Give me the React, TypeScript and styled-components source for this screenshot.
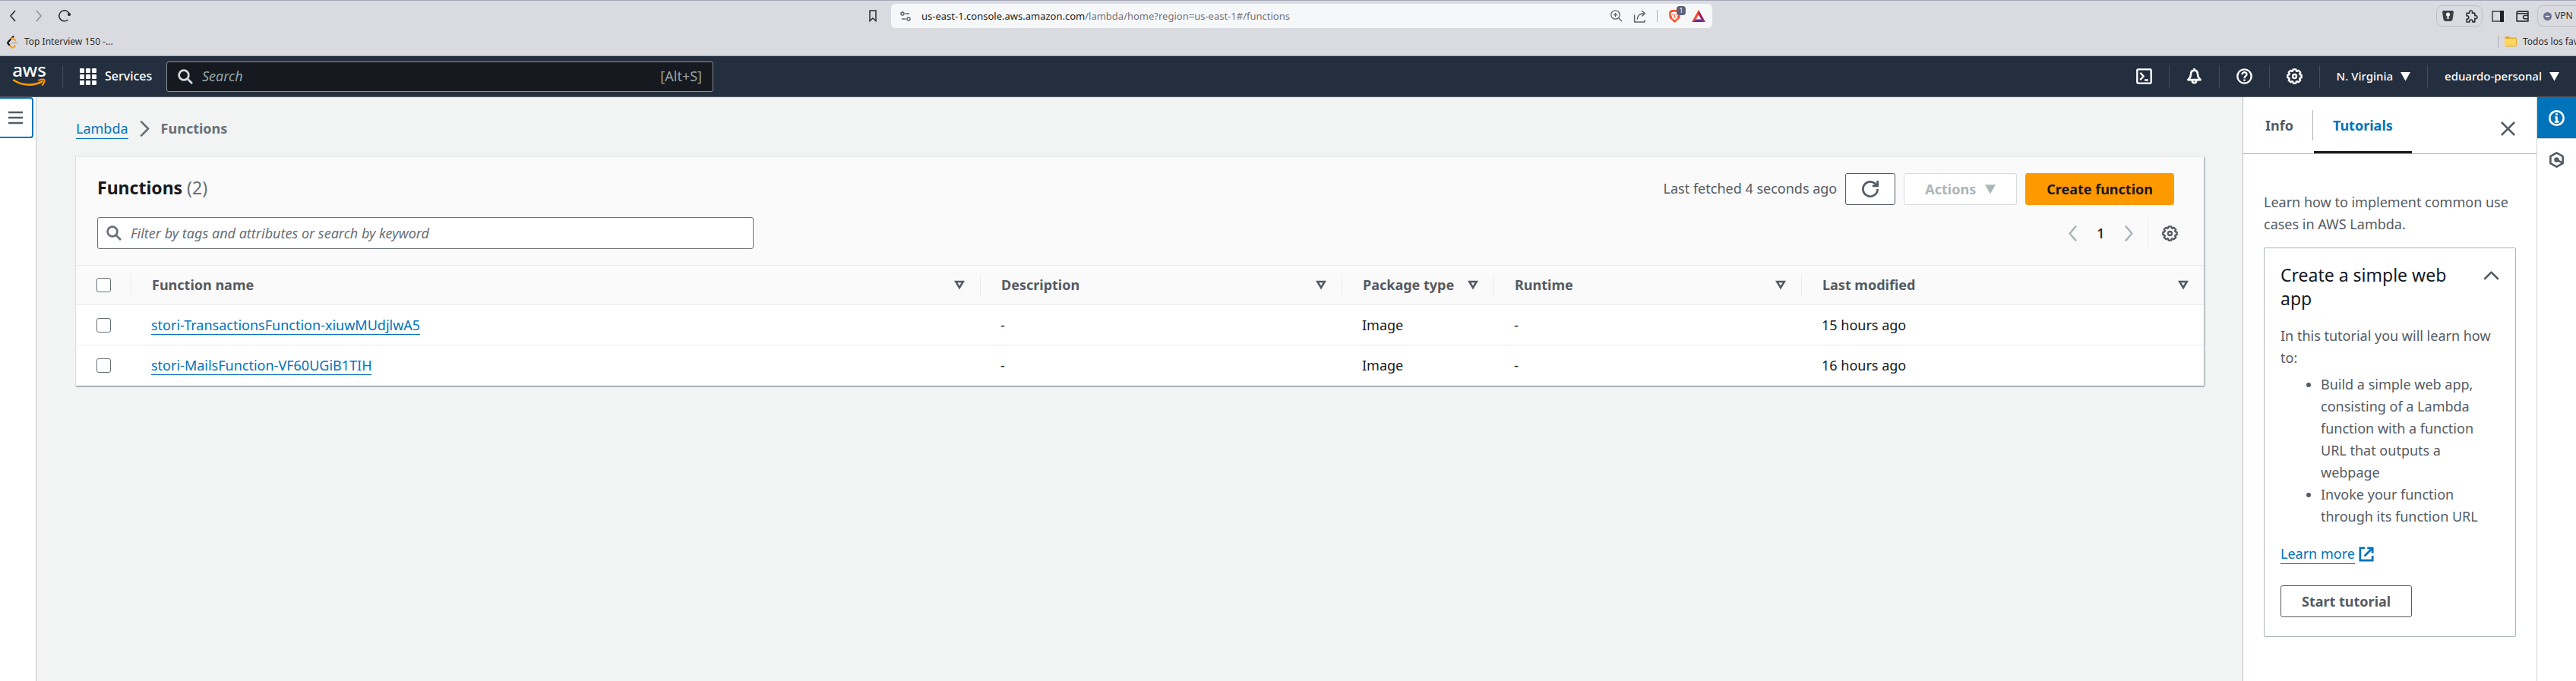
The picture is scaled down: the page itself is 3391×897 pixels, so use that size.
import React from 'react';
import styled, { createGlobalStyle, css } from 'styled-components';

const GlobalStyle = createGlobalStyle`
  *, *::before, *::after { box-sizing: border-box; }
  body {
    margin: 0;
    background: #f2f3f3;
    color: #16191f;
    font-family: "Noto Sans", "Open Sans", sans-serif;
    font-size: 18px;
    line-height: 29px;
  }
  button, input { font: inherit; color: inherit; }
  button { cursor: pointer; }
  h1, h2, p, ul { margin: 0; }
  svg { display: block; flex: none; }
`;

/* ---------- icons ---------- */

type IconProps = { size?: number; width?: number; children: React.ReactNode };

const Line = ({ size = 21, width = 2, children }: IconProps) => (
  <svg width={size} height={size} viewBox="0 0 16 16" fill="none" stroke="currentColor" strokeWidth={width} strokeLinejoin="round" aria-hidden="true">
    {children}
  </svg>
);

const gearPath = (() => {
  const points: string[] = [];
  const teeth = 8;
  for (let i = 0; i < teeth; i++) {
    const mid = (i / teeth) * Math.PI * 2 - Math.PI / 2;
    [[-0.3, 5.7], [-0.2, 7.1], [0.2, 7.1], [0.3, 5.7]].forEach(([a, r]) =>
      points.push(`${(8 + Math.cos(mid + a) * r).toFixed(2)} ${(8 + Math.sin(mid + a) * r).toFixed(2)}`),
    );
  }
  return `M${points.join('L')}Z`;
})();

const GearIcon = () => <Line width={1.8}><path d={gearPath} /><circle cx="8" cy="8" r="1.900" /></Line>;
const SearchIcon = () => <Line size={20} width={2.2}><circle cx="6.4" cy="6.4" r="5.1" /><path d="M10 10l5.2 5.2" /></Line>;
const RefreshIcon = () => (
  <Line size={22}><path strokeLinejoin="miter" d="M10 5h5V0M15 8a7 7 0 1 1-.7-3" /></Line>
);
const CaretDown = ({ size = 13 }: { size?: number }) => (
  <svg width={size} height={size} viewBox="0 0 12 12" fill="currentColor" aria-hidden="true"><path d="M0 1h12L6 11.500z" /></svg>
);
const SortIcon = () => (
  <svg width="14" height="13" viewBox="0 0 14 13" fill="none" stroke="currentColor" strokeWidth="2.600" aria-hidden="true"><path d="M2.200 2h9.600L7 10z" /></svg>
);
const LogoSvg = styled.svg`
  overflow: visible;
`;
const AwsLogo = () => (
  <LogoSvg width="44" height="32" viewBox="0 0 44 32" aria-hidden="true">
    <text x="21.500" y="15" textAnchor="middle" fontSize="24" fontWeight="500" fill="#fff">aws</text>
    <path d="M1 19.500C12 27 27 27.500 38.500 21.300" fill="none" stroke="#f90" strokeWidth="2.600" strokeLinecap="round" />
    <path d="M34 19.600c3-1 6.500-1.300 7.400-.4.800 1-.4 4.500-2.700 6.800" fill="none" stroke="#f90" strokeWidth="2" strokeLinecap="round" />
  </LogoSvg>
);
const GridIcon = () => (
  <svg width="22" height="22" viewBox="0 0 22 22" fill="currentColor" aria-hidden="true">
    {[0, 8, 16].map((y) => [0, 8, 16].map((x) => <rect key={`${x}-${y}`} x={x} y={y} width="6" height="6" rx="1" />))}
  </svg>
);
const BraveIcon = () => (
  <svg width="17" height="18" viewBox="0 0 17 18" aria-hidden="true">
    <path d="M4 1h9l3 3-.6 7.500L8.500 18 1.600 11.500 1 4z" fill="#fb542b" />
    <path d="M4 4.500l2.500-.7h4l2.500.7.6 2-1.600 3.500.3 1.500-3.800 3-3.800-3L5 10 3.400 6.500z" fill="#fff" />
    <path d="M5 7l2.200.6M12 7l-2.200.6M8.500 7v3.500M6.800 11.800l1.700-.9 1.700.9" stroke="#fb542b" fill="none" />
  </svg>
);
const BatIcon = () => (
  <svg width="18" height="16" viewBox="0 0 18 16" aria-hidden="true">
    <path d="M9 0L0 16l5.600-3.600L9 6.200z" fill="#ff4724" />
    <path d="M9 0l9 16-5.600-3.600L9 6.200z" fill="#9e1f63" />
    <path d="M0 16h18l-5.600-3.600H5.600z" fill="#662d91" />
  </svg>
);
const LeetIcon = () => (
  <svg width="15" height="17" viewBox="0 0 15 17" fill="none" strokeWidth="2.200" strokeLinecap="round" aria-hidden="true">
    <path d="M8.500 1.200L1.800 8.300c-.6.700-.6 1.500 0 2.200L4 13" stroke="#111" />
    <path d="M6 4l2-.6 3 2.600M4.200 13.200l2.200 2.200c.7.500 1.600.500 2.300 0l2-2" stroke="#f89f1b" />
    <path d="M7 9.500h6.500" stroke="#b3b3b3" />
  </svg>
);

/* ---------- browser chrome ---------- */

const Chrome = styled.div`
  height: 74px;
  background: #dadbe0;
  border-top: 1px solid #a4a6b6;
  border-bottom: 1px solid #a9abb5;
  color: #2b2c30;
  font-size: 12px;
  line-height: 20px;
  overflow: hidden;
`;
const ChromeRow = styled.div`
  display: flex;
  align-items: center;
  height: 40px;
`;
const ChromeSide = styled.div<{ $end?: boolean }>`
  flex: 1 1 0;
  display: flex;
  align-items: center;
  justify-content: ${(p) => (p.$end ? 'flex-end' : 'flex-start')};
  gap: ${(p) => (p.$end ? '8px' : '10px')};
  padding-left: 5px;
`;
const ChromeButton = styled.button<{ $dim?: boolean }>`
  display: flex;
  justify-content: center;
  align-items: center;
  min-width: 24px;
  height: 24px;
  padding: 0;
  border: 0;
  background: none;
  color: ${(p) => (p.$dim ? '#909198' : '#2b2c30')};
`;
const AddressGroup = styled.div`
  flex: 0 1 1117px;
  display: flex;
  align-items: center;
  gap: 12px;
`;
const AddressBar = styled.div`
  flex: 1;
  display: flex;
  align-items: center;
  gap: 14px;
  height: 32px;
  padding: 0 9px 0 12px;
  border-radius: 6px;
  background: #f6f7f9;
  color: #5f6167;
`;
const Url = styled.span`
  flex: 1;
  font-size: 13px;
  color: #73747a;
  white-space: nowrap;
  b { font-weight: 400; color: #1c1d20; }
`;
const ThinRule = styled.span`
  flex: none;
  width: 1px;
  height: 16px;
  background: #a9abb5;
`;
const ShieldWrap = styled.span`
  position: relative;
  display: block;
`;
const Badge = styled.span`
  position: absolute;
  top: -4px;
  right: -6px;
  width: 12px;
  height: 12px;
  border-radius: 4px;
  background: #5e6175;
  color: #fff;
  font-size: 9px;
  line-height: 12px;
  text-align: center;
`;
const Pill = styled.div`
  display: flex;
  align-items: center;
  gap: 7px;
  height: 28px;
  padding: 0 2px;
  border: 1px solid #bfc0c6;
  border-radius: 8px;
`;
const VpnPill = styled(Pill)`
  gap: 4px;
  width: 51px;
  padding: 0 0 0 7px;
  border-right: 0;
  border-radius: 8px 0 0 8px;
`;
const BookmarkBar = styled.div`
  display: flex;
  justify-content: space-between;
  align-items: center;
  height: 28px;
  padding-left: 9px;
`;
const Bookmark = styled.a<{ $clip?: boolean }>`
  display: flex;
  align-items: center;
  gap: 8px;
  color: inherit;
  text-decoration: none;
  white-space: nowrap;
  ${(p) => p.$clip && css`width: 103px; overflow: hidden;`}
`;

/* ---------- console header ---------- */

const Nav = styled.header`
  display: flex;
  align-items: center;
  height: 54px;
  background: #232f3e;
  border-bottom: 1px solid #545b64;
  color: #fff;
  font-size: 16px;
  font-weight: 500;
`;
const LogoLink = styled.a`
  display: flex;
  width: 83px;
  height: 30px;
  padding-left: 17px;
  border-right: 1px solid #414d5c;
`;
const ServicesButton = styled.button`
  display: flex;
  align-items: center;
  gap: 11px;
  width: 136px;
  padding: 0 0 0 22px;
  border: 0;
  background: none;
`;
const NavSearch = styled.label`
  display: flex;
  align-items: center;
  gap: 12px;
  flex: 0 1 720px;
  height: 40px;
  padding: 0 14px;
  border: 1px solid #879596;
  border-radius: 3px;
  background: #16191f;
  color: #d5dbdb;
  font-size: 18px;
  font-weight: 400;
`;
const PlainInput = styled.input<{ $hint: string }>`
  flex: 1;
  min-width: 0;
  padding: 0;
  border: 0;
  outline: 0;
  background: none;
  &::placeholder { color: ${(p) => p.$hint}; font-style: italic; opacity: 1; }
`;
const Shortcut = styled.span`
  color: #95a5a6;
`;
const NavEnd = styled.nav`
  display: flex;
  margin-left: auto;
  font-size: 15px;
`;
const NavCell = styled.button<{ $wide?: boolean }>`
  display: flex;
  justify-content: center;
  align-items: center;
  gap: 10px;
  min-width: ${(p) => (p.$wide ? '142px' : '66px')};
  height: 30px;
  padding: ${(p) => (p.$wide ? '0 22px' : '0')};
  border: 0;
  border-right: 1px solid #414d5c;
  background: none;
  white-space: nowrap;
  &:last-child { border-right: 0; }
`;

/* ---------- page ---------- */

const Body = styled.div`
  display: flex;
  min-height: calc(100vh - 128px);
`;
const LeftRail = styled.aside`
  flex: none;
  width: 48px;
  background: #fff;
  border-right: 1px solid #c3caca;
`;
const MenuButton = styled.button`
  display: flex;
  align-items: center;
  width: 44px;
  height: 54px;
  padding: 0 0 0 11px;
  border: 2px solid #0073bb;
  border-left: 0;
  border-radius: 0 4px 4px 0;
  background: #fff;
  color: #545b64;
`;
const Main = styled.main`
  flex: 1;
  min-width: 0;
  padding: 27px 51px 27px 52px;
`;
const Breadcrumbs = styled.nav`
  display: flex;
  align-items: center;
  gap: 11px;
  margin-bottom: 22px;
  color: #687078;
  font-weight: 700;
`;
const TextLink = styled.a`
  color: #0073bb;
  font-weight: 400;
  line-height: 25px;
  border-bottom: 1px solid #0073bb;
  text-decoration: none;
`;
const Card = styled.section`
  background: #fafafa;
  border-top: 1px solid #eaeded;
  box-shadow: 0 1px 1px #879596, 1px 1px 2px rgba(0, 28, 36, 0.4);
`;
const CardHeader = styled.div`
  display: flex;
  flex-direction: column;
  gap: 16px;
  padding: 21px 28px;
`;
const HeaderRow = styled.div<{ $inset?: boolean }>`
  display: flex;
  align-items: center;
  gap: 11px;
  height: 42px;
  padding-right: ${(p) => (p.$inset ? '11px' : '0')};
`;
const CardTitle = styled.h1`
  flex: 1;
  padding-bottom: 4px;
  font-size: 23px;
  font-weight: 700;
`;
const Count = styled.span`
  color: #687078;
  font-weight: 400;
`;
const Muted = styled.span`
  padding-bottom: 2px;
  color: #545b64;
`;
const Button = styled.button<{ $kind?: 'primary' | 'off' }>`
  display: inline-flex;
  align-items: center;
  gap: 12px;
  height: 42px;
  padding: 0 27px;
  border: 1px solid #545b64;
  border-radius: 3px;
  background: #fff;
  color: #545b64;
  font-weight: 700;
  white-space: nowrap;
  ${(p) => p.$kind === 'primary' && css`border-color: #f90; background: #f90; color: #16191f;`}
  ${(p) => p.$kind === 'off' && css`border-color: #d5dbdb; color: #aab7b8;`}
`;
const IconButton = styled(Button)`
  padding: 0 21px;
`;
const FilterBox = styled.label`
  display: flex;
  align-items: center;
  gap: 12px;
  flex: 0 1 864px;
  height: 42px;
  padding: 0 11px;
  border: 1px solid #687078;
  border-radius: 3px;
  background: #fff;
  color: #687078;
`;
const Pager = styled.div`
  display: flex;
  align-items: center;
  height: 42px;
  margin-left: auto;
  font-weight: 500;
`;
const PagerButton = styled.button<{ $active?: boolean }>`
  display: flex;
  justify-content: center;
  align-items: center;
  width: 37px;
  height: 42px;
  padding: 0;
  border: 0;
  background: none;
  color: ${(p) => (p.$active ? '#16191f' : '#aab7b8')};
`;
const SettingsButton = styled(PagerButton)`
  width: 46px;
  margin-left: 6px;
  padding-left: 11px;
  border-left: 1px solid #eaeded;
  color: #545b64;
`;
const Table = styled.table`
  width: 100%;
  table-layout: fixed;
  border-collapse: collapse;
`;
const Col = styled.col<{ $w?: number }>`
  width: ${(p) => (p.$w ? `${p.$w}px` : 'auto')};
`;
const Row = styled.tr`
  height: 53px;
  background: #fff;
  border-top: 1px solid #eaeded;
`;
const HeadRow = styled(Row)`
  height: 52px;
  background: #fafafa;
`;
const Cell = styled.td`
  padding: 0 27px;
`;
const HeadCell = styled.th`
  padding: 0;
  color: #545b64;
  text-align: left;
`;
const HeadInner = styled.div`
  display: flex;
  justify-content: space-between;
  align-items: center;
  height: 27px;
  padding: 0 20px 0 27px;
  border-left: 1px solid #eaeded;
`;
const CheckCell = styled.td`
  padding: 0 0 0 27px;
`;
const Check = styled.input`
  appearance: none;
  display: block;
  width: 19px;
  height: 19px;
  margin: 0;
  border: 1px solid #687078;
  border-radius: 3px;
  background: #fff;
`;

/* ---------- help panel ---------- */

const Panel = styled.aside`
  flex: none;
  width: 388px;
  background: #fff;
  border-left: 1px solid #b9c2c2;
  border-right: 1px solid #ccd2d2;
  color: #545b64;
`;
const Tabs = styled.div`
  display: flex;
  align-items: center;
  height: 75px;
  padding: 0 27px 0 4px;
  border-bottom: 1px solid #aab7b8;
`;
const Tab = styled.button<{ $active?: boolean }>`
  height: 74px;
  padding: 4px 25px 0;
  border: 0;
  border-bottom: 3px solid ${(p) => (p.$active ? '#16191f' : 'transparent')};
  background: none;
  color: ${(p) => (p.$active ? '#0073bb' : '#545b64')};
  font-weight: 700;
`;
const TabRule = styled.span`
  width: 1px;
  height: 40px;
  margin-right: 1px;
  background: #aab7b8;
`;
const CloseButton = styled.button`
  display: flex;
  margin-left: auto;
  padding: 8px 0 0;
  border: 0;
  background: none;
`;
const PanelBody = styled.div`
  display: flex;
  flex-direction: column;
  gap: 16px;
  padding: 49px 27px 27px;
`;
const Tutorial = styled.section`
  padding: 20px 21px 25px;
  border: 1px solid #aab7b8;
  border-radius: 2px;
`;
const TutorialHead = styled.div`
  display: flex;
  justify-content: space-between;
  align-items: flex-start;
  gap: 40px;
  margin-bottom: 19px;
`;
const TutorialTitle = styled.h2`
  color: #16191f;
  font-size: 23px;
  font-weight: 400;
  line-height: 31px;
`;
const Collapse = styled.button`
  display: flex;
  padding: 5px 0;
  border: 0;
  background: none;
`;
const Steps = styled.ul`
  margin: 6px 0 20px;
  padding-left: 53px;
`;
const LearnMore = styled.div`
  display: flex;
  align-items: center;
  gap: 5px;
  height: 29px;
  margin-bottom: 27px;
  color: #0073bb;
`;
const RightRail = styled.aside`
  flex: none;
  width: 51px;
  background: #fff;
`;
const RailButton = styled.button<{ $active?: boolean }>`
  display: flex;
  justify-content: center;
  align-items: center;
  width: 51px;
  height: 55px;
  padding: 0;
  border: 0;
  border-bottom: 1px solid ${(p) => (p.$active ? '#d5dbdb' : 'transparent')};
  background: ${(p) => (p.$active ? '#0073bb' : '#fff')};
  color: ${(p) => (p.$active ? '#fff' : '#545b64')};
`;

const columns = [
  { label: 'Function name' },
  { label: 'Description', width: 476 },
  { label: 'Package type', width: 200 },
  { label: 'Runtime', width: 405 },
  { label: 'Last modified', width: 530 },
];

const functions = [
  { name: 'stori-TransactionsFunction-xiuwMUdjlwA5', description: '-', type: 'Image', runtime: '-', modified: '15 hours ago' },
  { name: 'stori-MailsFunction-VF60UGiB1TIH', description: '-', type: 'Image', runtime: '-', modified: '16 hours ago' },
];

const BrowserChrome = () => (
  <Chrome>
    <ChromeRow>
      <ChromeSide>
        <ChromeButton aria-label="Back"><Line size={16} width={1.6}><path d="M11 1L5 8l6 7" /></Line></ChromeButton>
        <ChromeButton $dim aria-label="Forward"><Line size={16} width={1.6}><path d="M5 1l6 7-6 7" /></Line></ChromeButton>
        <ChromeButton aria-label="Reload">
          <Line size={16} width={1.6}><path d="M12.500 13A7 7 0 1 1 14 4.500" /><circle cx="14" cy="6" r="1.300" fill="currentColor" /></Line>
        </ChromeButton>
      </ChromeSide>
      <AddressGroup>
        <ChromeButton aria-label="Bookmark this page">
          <svg width="12" height="16" viewBox="0 0 12 16" fill="none" stroke="currentColor" strokeWidth="1.500"><path d="M2 1h8v13.500l-4-3.500-4 3.500z" /></svg>
        </ChromeButton>
        <AddressBar>
          <svg width="14" height="13" viewBox="0 0 14 13" fill="none" stroke="currentColor" strokeWidth="1.500">
            <circle cx="3" cy="3" r="2" /><path d="M6.500 3H12M2 10h5.500" /><circle cx="11" cy="10" r="2" />
          </svg>
          <Url><b>us-east-1.console.aws.amazon.com</b>/lambda/home?region=us-east-1#/functions</Url>
          <Line size={16} width={1.3}><circle cx="6.500" cy="6.500" r="5.700" /><path d="M10.500 10.500L15 15M4 6.500h5M6.500 4v5" /></Line>
          <Line size={17} width={1.4}><path d="M1.500 6v9h12.500v-2.500M5 12c0-5 3.500-7.500 8-7.500M10.500 1l4 3.500-4 3.500" /></Line>
          <ThinRule />
          <ShieldWrap><BraveIcon /><Badge>1</Badge></ShieldWrap>
          <BatIcon />
        </AddressBar>
      </AddressGroup>
      <ChromeSide $end>
        <Pill>
          <ChromeButton aria-label="Password manager">
            <svg width="15" height="14" viewBox="0 0 15 14"><path d="M1 0h13l1 2-1.500 10-2 2h-8l-2-2L0 2z" fill="#3f4045" /><circle cx="7.500" cy="5" r="2.500" fill="#fff" /><path d="M6.500 5h2v6h-2z" fill="#fff" /></svg>
          </ChromeButton>
          <ChromeButton aria-label="Extensions">
            <Line size={17} width={1.5}><path d="M2 4h3.500c-.8-2 .3-3 1.700-3s2.500 1 1.700 3H12v3.300c2-.8 3 .3 3 1.700s-1 2.500-3 1.700V15H9.300c.6-1.700-.4-2.700-1.900-2.700S5 13.300 5.600 15H2v-3.700c1.700.5 2.500-.6 2.500-2S3.500 7 2 7.500z" /></Line>
          </ChromeButton>
        </Pill>
        <ChromeButton aria-label="Side panel">
          <svg width="16" height="15" viewBox="0 0 16 15"><path d="M1 1h14v13H1z" fill="none" stroke="#3f4045" strokeWidth="1.500" /><path d="M11 0h5v15h-5z" fill="#1f2024" /></svg>
        </ChromeButton>
        <ChromeButton aria-label="Wallet">
          <Line size={17} width={1.5}><path d="M15 4.500V2H2.500C.5 2 .5 4.500 2.500 4.500H15V14H1V3M15 7h-4.500c-1 0-1.500.7-1.500 2s.5 2 1.500 2H15z" /></Line>
        </ChromeButton>
        <VpnPill>
          <svg width="11" height="11" viewBox="0 0 11 11"><circle cx="5.500" cy="5.500" r="5.500" fill="#6e7191" /><path d="M3 5.500h5" stroke="#fff" strokeWidth="1.500" /></svg>
          VPN
        </VpnPill>
      </ChromeSide>
    </ChromeRow>
    <BookmarkBar>
      <Bookmark href="#"><LeetIcon />Top Interview 150 -...</Bookmark>
      <Bookmark href="#" $clip>
        <ThinRule />
        <svg width="16" height="14" viewBox="0 0 16 14"><path d="M0 2l1.500-2h4L7 1.500h8L16 3v9l-1.500 1.500h-13L0 12z" fill="#e0a92e" /><path d="M0 3h15v9.500H0z" fill="#ffd75e" /></svg>
        Todos los favoritos
      </Bookmark>
    </BookmarkBar>
  </Chrome>
);

const ConsoleNav = () => (
  <Nav>
    <LogoLink href="#" aria-label="AWS home"><AwsLogo /></LogoLink>
    <ServicesButton><GridIcon />Services</ServicesButton>
    <NavSearch>
      <SearchIcon />
      <PlainInput $hint="#95a5a6" type="text" aria-label="Search" placeholder="Search" />
      <Shortcut>[Alt+S]</Shortcut>
    </NavSearch>
    <NavEnd>
      <NavCell aria-label="CloudShell"><Line width={1.8}><rect x="1" y="1" width="14" height="14" rx="1" /><path d="M4 4.500L7.500 8 4 11.500M8.500 11.800H12" /></Line></NavCell>
      <NavCell aria-label="Notifications"><Line><path d="M8 2C5.500 2 4.500 4 4.500 6.500S3 10 1.800 11.500h12.400C13 10 11.500 9 11.500 6.500S10.500 2 8 2zM8 0v2M6 12.500a2 2 0 0 0 4 0" /></Line></NavCell>
      <NavCell aria-label="Help"><Line width={1.8}><circle cx="8" cy="8" r="7" /><path d="M5.700 6.300C5.700 3 10.500 3.300 10.300 6.200 10.100 8 8 7.600 8 10M8 11v1.800" /></Line></NavCell>
      <NavCell aria-label="Settings"><GearIcon /></NavCell>
      <NavCell $wide>N. Virginia <CaretDown /></NavCell>
      <NavCell $wide>eduardo-personal <CaretDown /></NavCell>
    </NavEnd>
  </Nav>
);

const FunctionsTable = () => (
  <Table>
    <colgroup>
      <Col $w={72} />
      {columns.map((c) => <Col key={c.label} $w={c.width} />)}
    </colgroup>
    <thead>
      <HeadRow>
        <CheckCell as="th"><Check type="checkbox" aria-label="Select all functions" /></CheckCell>
        {columns.map((c) => (
          <HeadCell key={c.label}><HeadInner>{c.label}<SortIcon /></HeadInner></HeadCell>
        ))}
      </HeadRow>
    </thead>
    <tbody>
      {functions.map((f) => (
        <Row key={f.name}>
          <CheckCell><Check type="checkbox" aria-label={`Select ${f.name}`} /></CheckCell>
          <Cell><TextLink href="#">{f.name}</TextLink></Cell>
          <Cell>{f.description}</Cell>
          <Cell>{f.type}</Cell>
          <Cell>{f.runtime}</Cell>
          <Cell>{f.modified}</Cell>
        </Row>
      ))}
    </tbody>
  </Table>
);

const HelpPanel = () => (
  <Panel>
    <Tabs>
      <Tab>Info</Tab>
      <TabRule />
      <Tab $active>Tutorials</Tab>
      <CloseButton aria-label="Close"><Line><path d="M1.500 1.500l13 13M14.500 1.500l-13 13" /></Line></CloseButton>
    </Tabs>
    <PanelBody>
      <p>Learn how to implement common use cases in AWS Lambda.</p>
      <Tutorial>
        <TutorialHead>
          <TutorialTitle>Create a simple web app</TutorialTitle>
          <Collapse aria-label="Collapse"><Line><path d="M1 12l7-7 7 7" /></Line></Collapse>
        </TutorialHead>
        <p>In this tutorial you will learn how to:</p>
        <Steps>
          <li>Build a simple web app, consisting of a Lambda function with a function URL that outputs a webpage</li>
          <li>Invoke your function through its function URL</li>
        </Steps>
        <LearnMore>
          <TextLink href="#">Learn more</TextLink>
          <Line size={20} width={2.2}><path strokeLinejoin="miter" d="M6.500 1.500h-5v13h13v-5M9 1.500h5.500V7M14 2L6 10" /></Line>
        </LearnMore>
        <Button>Start tutorial</Button>
      </Tutorial>
    </PanelBody>
  </Panel>
);

export default function App() {
  return (
    <>
      <GlobalStyle />
      <BrowserChrome />
      <ConsoleNav />
      <Body>
        <LeftRail>
          <MenuButton aria-label="Open navigation">
            <svg width="19" height="18" viewBox="0 0 19 18" stroke="currentColor" strokeWidth="2.600"><path d="M0 2h19M0 9h19M0 16h19" /></svg>
          </MenuButton>
        </LeftRail>
        <Main>
          <Breadcrumbs aria-label="Breadcrumbs">
            <TextLink href="#">Lambda</TextLink>
            <Line><path d="M4 .5L11.500 8 4 15.500" /></Line>
            <span>Functions</span>
          </Breadcrumbs>
          <Card>
            <CardHeader>
              <HeaderRow $inset>
                <CardTitle>Functions <Count>(2)</Count></CardTitle>
                <Muted>Last fetched 4 seconds ago</Muted>
                <IconButton aria-label="Refresh"><RefreshIcon /></IconButton>
                <Button $kind="off" disabled>Actions <CaretDown size={14} /></Button>
                <Button $kind="primary">Create function</Button>
              </HeaderRow>
              <HeaderRow>
                <FilterBox>
                  <SearchIcon />
                  <PlainInput $hint="#687078" type="text" aria-label="Filter functions" placeholder="Filter by tags and attributes or search by keyword" />
                </FilterBox>
                <Pager>
                  <PagerButton aria-label="Previous page"><Line><path d="M11.500.5L5 8l6.500 7.500" /></Line></PagerButton>
                  <PagerButton $active>1</PagerButton>
                  <PagerButton aria-label="Next page"><Line><path d="M4.500.5L11 8l-6.500 7.500" /></Line></PagerButton>
                  <SettingsButton aria-label="Preferences"><GearIcon /></SettingsButton>
                </Pager>
              </HeaderRow>
            </CardHeader>
            <FunctionsTable />
          </Card>
        </Main>
        <HelpPanel />
        <RightRail>
          <RailButton $active aria-label="Info panel">
            <Line><circle cx="8" cy="8" r="7" /><path d="M8 3.300v2M6.300 7.300H8v4.200M6 11.700h4.200" /></Line>
          </RailButton>
          <RailButton aria-label="Diagnostics">
            <Line><path d="M8 1l6.200 3.500v7L8 15l-6.200-3.500v-7z" /><circle cx="8" cy="8" r="1.500" fill="currentColor" /><path d="M9 8.500l4.500 2.500" /></Line>
          </RailButton>
        </RightRail>
      </Body>
    </>
  );
}
